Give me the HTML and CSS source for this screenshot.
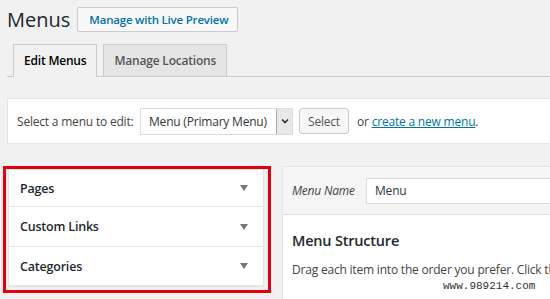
FILE: index.html
```html
<!DOCTYPE html>
<html lang="en">
<head>
    <meta charset="UTF-8">
    <title>Menus</title>
    <link rel="stylesheet" href="styles.css">
</head>
<body>
    <div class="wrap">
        <div class="title-row">
            <h1>Menus</h1>
            <a class="title-action" href="#">Manage with Live Preview</a>
        </div>
        <div class="nav-tabs">
            <a class="nav-tab active" href="#">Edit Menus</a>
            <a class="nav-tab" href="#">Manage Locations</a>
        </div>
        <div class="manage-menus">
            <span class="select-label">Select a menu to edit:</span>
            <div class="fake-select">
                <span class="fake-select-text">Menu (Primary Menu)</span>
                <span class="fake-select-arrow">
                    <svg width="8" height="6" viewBox="0 0 8 6"><path d="M1 1.5 L4 4.5 L7 1.5" fill="none" stroke="#333" stroke-width="1.6"/></svg>
                </span>
            </div>
            <button class="btn">Select</button>
            <span class="or-text">or <a href="#">create a new menu</a>.</span>
        </div>
        <div class="columns">
            <div class="side-col">
                <div class="highlight">
                    <div class="accordion">
                        <div class="acc-row"><span>Pages</span><span class="tri"></span></div>
                        <div class="acc-row"><span>Custom Links</span><span class="tri"></span></div>
                        <div class="acc-row"><span>Categories</span><span class="tri"></span></div>
                    </div>
                </div>
            </div>
            <div class="main-col">
                <div class="menu-header">
                    <label class="menu-name-label">Menu Name</label>
                    <div class="menu-name-input">Menu</div>
                </div>
                <div class="menu-body">
                    <h3>Menu Structure</h3>
                    <p>Drag each item into the order you prefer. Click th</p>
                    <div class="watermark">www.989214.com</div>
                </div>
            </div>
        </div>
    </div>
</body>
</html>
```

FILE: styles.css
```css
body {
    margin: 0;
    height: 299px;
    background: #f1f1f1;
    font-family: 'Open Sans', sans-serif;
    font-size: 12px;
    letter-spacing: -0.2px;
    color: #444;
    overflow: hidden;
}
a {
    text-decoration: none;
}
.wrap {
    padding-left: 7px;
}
.title-row {
    display: flex;
    align-items: center;
    margin-top: 5px;
    height: 29px;
}
.title-row h1 {
    margin: 0;
    font-size: 20px;
    font-weight: 400;
    letter-spacing: 0;
    line-height: 29px;
    color: #23282d;
}
.title-action {
    margin-left: 7px;
    height: 23px;
    line-height: 23px;
    padding: 0 9px 0 11px;
    border: 1px solid #ccc;
    border-radius: 2px;
    background: #f7f7f7;
    color: #0073aa;
    font-size: 11.5px;
    font-weight: 600;
}
.nav-tabs {
    display: flex;
    gap: 6px;
    margin-top: 10px;
    padding-left: 6px;
    border-bottom: 1px solid #ccc;
}
.nav-tab {
    height: 31px;
    line-height: 31px;
    padding: 0 10px;
    margin-bottom: -1px;
    border: 1px solid #ccc;
    border-bottom: none;
    background: #e5e5e5;
    color: #555;
    font-size: 12px;
    font-weight: 600;
}
.nav-tab.active {
    background: #f1f1f1;
    color: #000;
    height: 32px;
}
.manage-menus {
    display: flex;
    align-items: center;
    margin-top: 21px;
    height: 44px;
    padding-left: 9px;
    background: #fff;
    border: 1px solid #e5e5e5;
    border-right: none;
}
.select-label {
    width: 117px;
    white-space: nowrap;
    color: #444;
}
.fake-select {
    display: flex;
    margin-left: 6px;
    height: 25px;
    border: 1px solid #ddd;
    background: #fff;
}
.fake-select-text {
    padding: 0 8px;
    line-height: 25px;
    color: #32373c;
    width: 119px;
    white-space: nowrap;
}
.fake-select-arrow {
    width: 15px;
    display: flex;
    align-items: center;
    justify-content: center;
    background: #e8e8e8;
    border-left: 1px solid #aaa;
}
.btn {
    margin-left: 6px;
    width: 50px;
    height: 26px;
    padding: 0;
    border: 1px solid #ccc;
    border-radius: 3px;
    background: #f7f7f7;
    color: #555;
    font-family: inherit;
    font-size: 12px;
    letter-spacing: -0.2px;
}
.or-text {
    margin-left: 8px;
}
.or-text a {
    color: #0073aa;
    text-decoration: underline;
}
.columns {
    display: flex;
    margin-top: 22px;
}
.side-col {
    flex: none;
    width: 268px;
    margin-left: -4px;
}
.highlight {
    border: 3px solid #e3000f;
    padding: 0 4px 4px 2px;
}
.accordion {
    background: #fff;
    border: 1px solid #e5e5e5;
    box-shadow: 0 1px 1px rgba(0, 0, 0, 0.04);
}
.acc-row {
    display: flex;
    justify-content: space-between;
    align-items: center;
    height: 38px;
    padding: 0 15px 0 11px;
    border-top: 1px solid #e5e5e5;
    color: #23282d;
    font-size: 12.5px;
    font-weight: 600;
}
.acc-row:first-child {
    height: 36px;
    border-top: none;
}
.acc-row:nth-child(2) {
    height: 39px;
}
.tri {
    width: 0;
    height: 0;
    border-left: 4px solid transparent;
    border-right: 4px solid transparent;
    border-top: 6px solid #777;
}
.main-col {
    flex: 1;
    min-width: 0;
    margin-left: 11px;
    border: 1px solid #e5e5e5;
    border-right: none;
    background: #fff;
    overflow: hidden;
}
.menu-header {
    display: flex;
    align-items: center;
    height: 47px;
    padding-left: 9px;
    background: #f5f5f5;
    border-bottom: 1px solid #dfdfdf;
}
.menu-name-label {
    font-style: italic;
    color: #444;
    width: 74px;
}
.menu-name-input {
    flex: 1;
    height: 24px;
    line-height: 24px;
    padding-left: 8px;
    border: 1px solid #ddd;
    border-right: none;
    background: #fff;
    color: #32373c;
}
.menu-body {
    position: relative;
    padding: 16px 9px 0;
    height: 80px;
}
.menu-body h3 {
    margin: 0;
    font-size: 14.5px;
    font-weight: 600;
    color: #23282d;
}
.menu-body p {
    margin: 11px 0 0;
    white-space: nowrap;
    color: #444;
}
.watermark {
    position: absolute;
    left: 160px;
    top: 65px;
    font-family: 'Liberation Mono', monospace;
    font-size: 11px;
    letter-spacing: 0;
    color: #333;
}
```
